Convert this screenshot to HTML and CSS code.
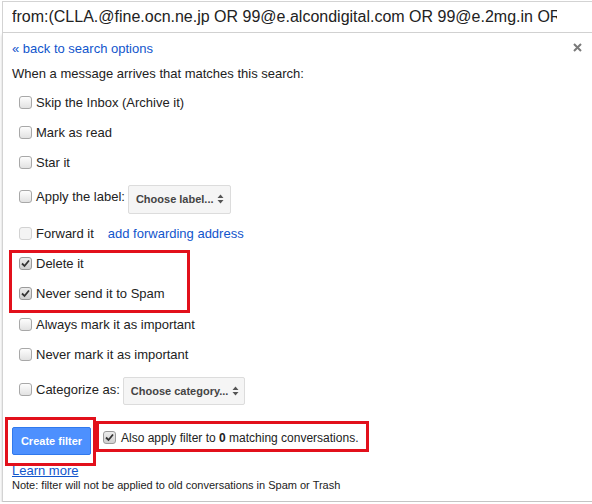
FILE: index.html
```html
<!DOCTYPE html>
<html lang="en">
<head>
    <meta charset="UTF-8">
    <title>Create filter</title>
    <link rel="stylesheet" href="styles.css">
</head>
<body>
    <div class="search">
        <div class="search-text">from:(CLLA.@fine.ocn.ne.jp OR 99@e.alcondigital.com OR 99@e.2mg.in OR 99@e.hotdeals.com)</div>
    </div>
    <div class="panel">
        <div class="panel-head">
            <a class="link" href="#">« back to search options</a>
            <svg class="close" width="9" height="9" viewBox="0 0 9 9"><path d="M1 1L8 8M8 1L1 8" stroke="#7a7a7a" stroke-width="2"/></svg>
        </div>
        <div class="intro">When a message arrives that matches this search:</div>

        <div class="rows">
            <div class="row"><span class="cb"></span><span>Skip the Inbox (Archive it)</span></div>
            <div class="row"><span class="cb"></span><span>Mark as read</span></div>
            <div class="row"><span class="cb"></span><span>Star it</span></div>
            <div class="row row-label">
                <span class="cb"></span><span>Apply the label:</span>
                <span class="select select-label">Choose label...<svg width="7" height="10" viewBox="0 0 7 10"><path d="M0.5 4L3.5 0.5L6.5 4ZM0.5 6L3.5 9.5L6.5 6Z" fill="#555"/></svg></span>
            </div>
            <div class="row row-forward"><span class="cb cb-off"></span><span>Forward it</span><a class="link fwd" href="#">add forwarding address</a></div>
            <div class="marked marked-rows">
                <div class="row"><span class="cb cb-on"><svg width="11" height="11" viewBox="0 0 11 11"><path d="M2 5.5L4.5 8L9 2.5" fill="none" stroke="#333" stroke-width="1.8"/></svg></span><span>Delete it</span></div>
                <div class="row"><span class="cb cb-on"><svg width="11" height="11" viewBox="0 0 11 11"><path d="M2 5.5L4.5 8L9 2.5" fill="none" stroke="#333" stroke-width="1.8"/></svg></span><span>Never send it to Spam</span></div>
            </div>
            <div class="row row-always"><span class="cb"></span><span>Always mark it as important</span></div>
            <div class="row"><span class="cb"></span><span>Never mark it as important</span></div>
            <div class="row row-cat">
                <span class="cb"></span><span>Categorize as:</span>
                <span class="select select-cat">Choose category...<svg width="7" height="10" viewBox="0 0 7 10"><path d="M0.5 4L3.5 0.5L6.5 4ZM0.5 6L3.5 9.5L6.5 6Z" fill="#555"/></svg></span>
            </div>
        </div>

        <div class="actions">
            <span class="marked marked-btn"><button class="create-button">Create filter</button></span>
            <span class="marked marked-apply"><span class="cb cb-on"><svg width="11" height="11" viewBox="0 0 11 11"><path d="M2 5.5L4.5 8L9 2.5" fill="none" stroke="#333" stroke-width="1.8"/></svg></span><span>Also apply filter to <b>0</b> matching conversations.</span></span>
        </div>
        <a class="link learn" href="#">Learn more</a>
        <div class="note">Note: filter will not be applied to old conversations in Spam or Trash</div>
    </div>
</body>
</html>
```

FILE: styles.css
```css
body {
    margin: 0;
    font-family: Arial, "Liberation Sans", sans-serif;
    font-size: 13px;
    color: #222;
    background-color: #fff;
    overflow: hidden;
}
.search {
    margin: 1px 0 0 2px;
    height: 32px;
    box-sizing: border-box;
    border-top: 1px solid #d3d3d3;
    border-left: 1px solid #d3d3d3;
    border-bottom: 1px solid #d3d3d3;
    padding-left: 9px;
    display: flex;
    align-items: center;
}
.search-text {
    font-size: 16px;
    color: #222;
    white-space: nowrap;
    overflow: hidden;
    width: 545px;
}
.panel {
    margin-left: 2px;
    height: 469px;
    box-sizing: border-box;
    border-left: 1px solid #d3d3d3;
    border-bottom: 1px solid #c4c4c4;
    box-shadow: 0 2px 3px rgba(0, 0, 0, 0.2);
    padding: 8px 10px 0 9px;
}
.link {
    color: #15c;
    text-decoration: none;
}
.panel-head {
    display: flex;
    justify-content: space-between;
    align-items: center;
    height: 16px;
    line-height: 16px;
}
.close {
    margin-top: -3px;
}
.intro {
    margin-top: 9px;
    line-height: 16px;
}
.rows {
    margin-top: 5px;
}
.row {
    display: flex;
    align-items: center;
    height: 30px;
    padding-left: 7px;
}
.row-label {
    height: 38px;
}
.row-forward {
    margin-top: 3px;
}
.row-always {
    margin-top: 1px;
}
.row-cat {
    height: 40px;
}
.cb {
    width: 13px;
    height: 13px;
    box-sizing: border-box;
    border: 1px solid #a8a8a8;
    border-radius: 3px;
    background: linear-gradient(#fdfdfd, #e2e2e2);
    margin-right: 4px;
    display: flex;
    align-items: center;
    justify-content: center;
    flex-shrink: 0;
}
.cb-on {
    background: linear-gradient(#ececec, #cfcfcf);
    border-color: #9a9a9a;
}
.cb-off {
    border-color: #d2d2d2;
    background: #f4f4f4;
}
.fwd {
    margin-left: 14px;
}
.select {
    display: inline-flex;
    align-items: center;
    justify-content: space-between;
    box-sizing: border-box;
    border: 1px solid #dcdcdc;
    border-radius: 2px;
    background-color: #f5f5f5;
    color: #444;
    font-size: 11px;
    font-weight: bold;
    padding: 0 6px 0 7px;
}
.select-label {
    width: 103px;
    height: 29px;
    margin-left: 3px;
    margin-top: 6px;
}
.select-cat {
    width: 122px;
    height: 28px;
    margin-left: 3px;
    margin-top: 4px;
    padding-right: 5px;
}
.marked {
    position: relative;
}
.marked::after {
    content: "";
    position: absolute;
    box-sizing: border-box;
    border: 3px solid #e2101b;
}
.marked-rows::after {
    left: -3px;
    top: 2px;
    width: 181px;
    height: 63px;
}
.actions {
    display: flex;
    align-items: flex-start;
    margin-top: 18px;
}
.create-button {
    display: block;
    width: 79px;
    height: 28px;
    padding: 0;
    background-color: #4d90fe;
    border: 1px solid #3079ed;
    border-radius: 2px;
    color: #fff;
    font-family: Arial, "Liberation Sans", sans-serif;
    font-size: 11px;
    font-weight: bold;
}
.marked-btn::after {
    left: -7px;
    top: -10px;
    width: 91px;
    height: 49px;
}
.marked-apply {
    display: flex;
    align-items: flex-start;
    margin-left: 12px;
    font-size: 12px;
    line-height: 15px;
    padding-top: 4px;
}
.marked-apply .cb {
    margin-right: 5px;
}
.marked-apply::after {
    left: -7px;
    top: -6px;
    width: 273px;
    height: 31px;
}
.learn {
    display: block;
    margin-top: 8px;
    line-height: 15px;
    text-decoration: underline;
    width: max-content;
}
.note {
    margin-top: 1px;
    font-size: 11px;
    line-height: 13px;
}
```
